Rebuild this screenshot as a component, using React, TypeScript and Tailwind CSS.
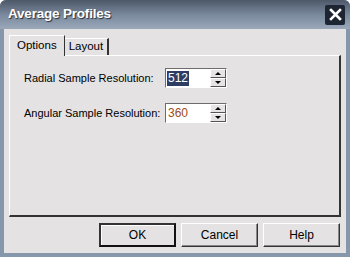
import React from 'react';

const SpinBox: React.FC<{ value: string; selected?: boolean }> = ({ value, selected }) => (
  <div className="flex h-[20px] w-[62px] items-center border border-t-[#6d6d6d] border-l-[#6d6d6d] border-b-white border-r-white bg-white">
    <div className="flex flex-1 items-center pl-[1px]">
      <span
        className={`px-[1px] text-[12px] leading-[15px] ${
          selected ? 'bg-[#2e3d63] text-white' : 'text-[#9a4d16]'
        }`}
      >
        {value}
      </span>
    </div>
    <div className="flex h-full w-[16px] flex-col">
      <div className="flex flex-1 items-center justify-center border border-t-white border-l-white border-b-[#555] border-r-[#555] bg-[#e6e4e4]">
        <span className="h-0 w-0 border-x-[3px] border-b-[3px] border-x-transparent border-b-black" />
      </div>
      <div className="flex flex-1 items-center justify-center border border-t-white border-l-white border-b-[#555] border-r-[#555] bg-[#e6e4e4]">
        <span className="h-0 w-0 border-x-[3px] border-t-[3px] border-x-transparent border-t-black" />
      </div>
    </div>
  </div>
);

const Button: React.FC<{ label: string; isDefault?: boolean }> = ({ label, isDefault }) => (
  <button
    type="button"
    className={`h-[24px] w-[77px] bg-[#e4e2e2] text-[12px] text-black ${
      isDefault
        ? 'border-2 border-t-[#333] border-l-[#333] border-b-[#111] border-r-[#111] shadow-[inset_1px_1px_0_#fff]'
        : 'border border-t-white border-l-white border-b-[#333] border-r-[#333] shadow-[inset_-1px_-1px_0_#888]'
    }`}
  >
    {label}
  </button>
);

export default function App() {
  return (
    <div className="flex h-[257px] w-[350px] flex-col overflow-hidden rounded-t-[6px] bg-[#8696ab] font-['Liberation_Sans',Arial,sans-serif]">
      {/* Title bar */}
      <div className="flex h-[29px] items-center justify-between bg-gradient-to-b from-[#4d5869] via-[#7a889c] to-[#9aa8ba] pl-[8px] pr-[5px]">
        <span className="text-[13.5px] font-bold tracking-[-0.2px] text-white [text-shadow:1px_1px_1px_#2a2f38]">
          Average Profiles
        </span>
        <div className="flex h-[20px] w-[20px] items-center justify-center rounded-[2px] bg-[#1c2531]">
          <svg width="13" height="13" viewBox="0 0 13 13">
            <path d="M2 2 L11 11 M11 2 L2 11" stroke="white" strokeWidth="2.6" strokeLinecap="square" />
          </svg>
        </div>
      </div>

      {/* Client area */}
      <div className="mx-[4px] mb-[4px] flex flex-1 flex-col bg-[#e4e2e2] px-[5px] pt-[6px]">
        {/* Tabs */}
        <div className="flex items-end text-[11.5px] text-black">
          <div className="relative z-10 -mb-[1px] flex h-[21px] items-center border border-b-0 border-t-white border-l-white border-r-[#333] bg-[#e4e2e2] px-[7px]">
            Options
          </div>
          <div className="flex h-[17px] items-center border border-b-0 border-t-white border-l-0 border-r-2 border-r-[#333] px-[4px]">
            Layout
          </div>
        </div>

        {/* Panel */}
        <div className="flex h-[162px] flex-col gap-[15px] border border-t-white border-l-white border-b-2 border-r-2 border-b-[#333] border-r-[#333] pl-[14px] pt-[12px] text-[11px] text-black">
          <div className="flex items-center">
            <span className="w-[141px] whitespace-nowrap">Radial Sample Resolution:</span>
            <SpinBox value="512" selected />
          </div>
          <div className="flex items-center">
            <span className="w-[141px] whitespace-nowrap">Angular Sample Resolution:</span>
            <SpinBox value="360" />
          </div>
        </div>

        {/* Buttons */}
        <div className="flex justify-end gap-[5px] pr-[1px] pt-[6px]">
          <Button label="OK" isDefault />
          <Button label="Cancel" />
          <Button label="Help" />
        </div>
      </div>
    </div>
  );
}
